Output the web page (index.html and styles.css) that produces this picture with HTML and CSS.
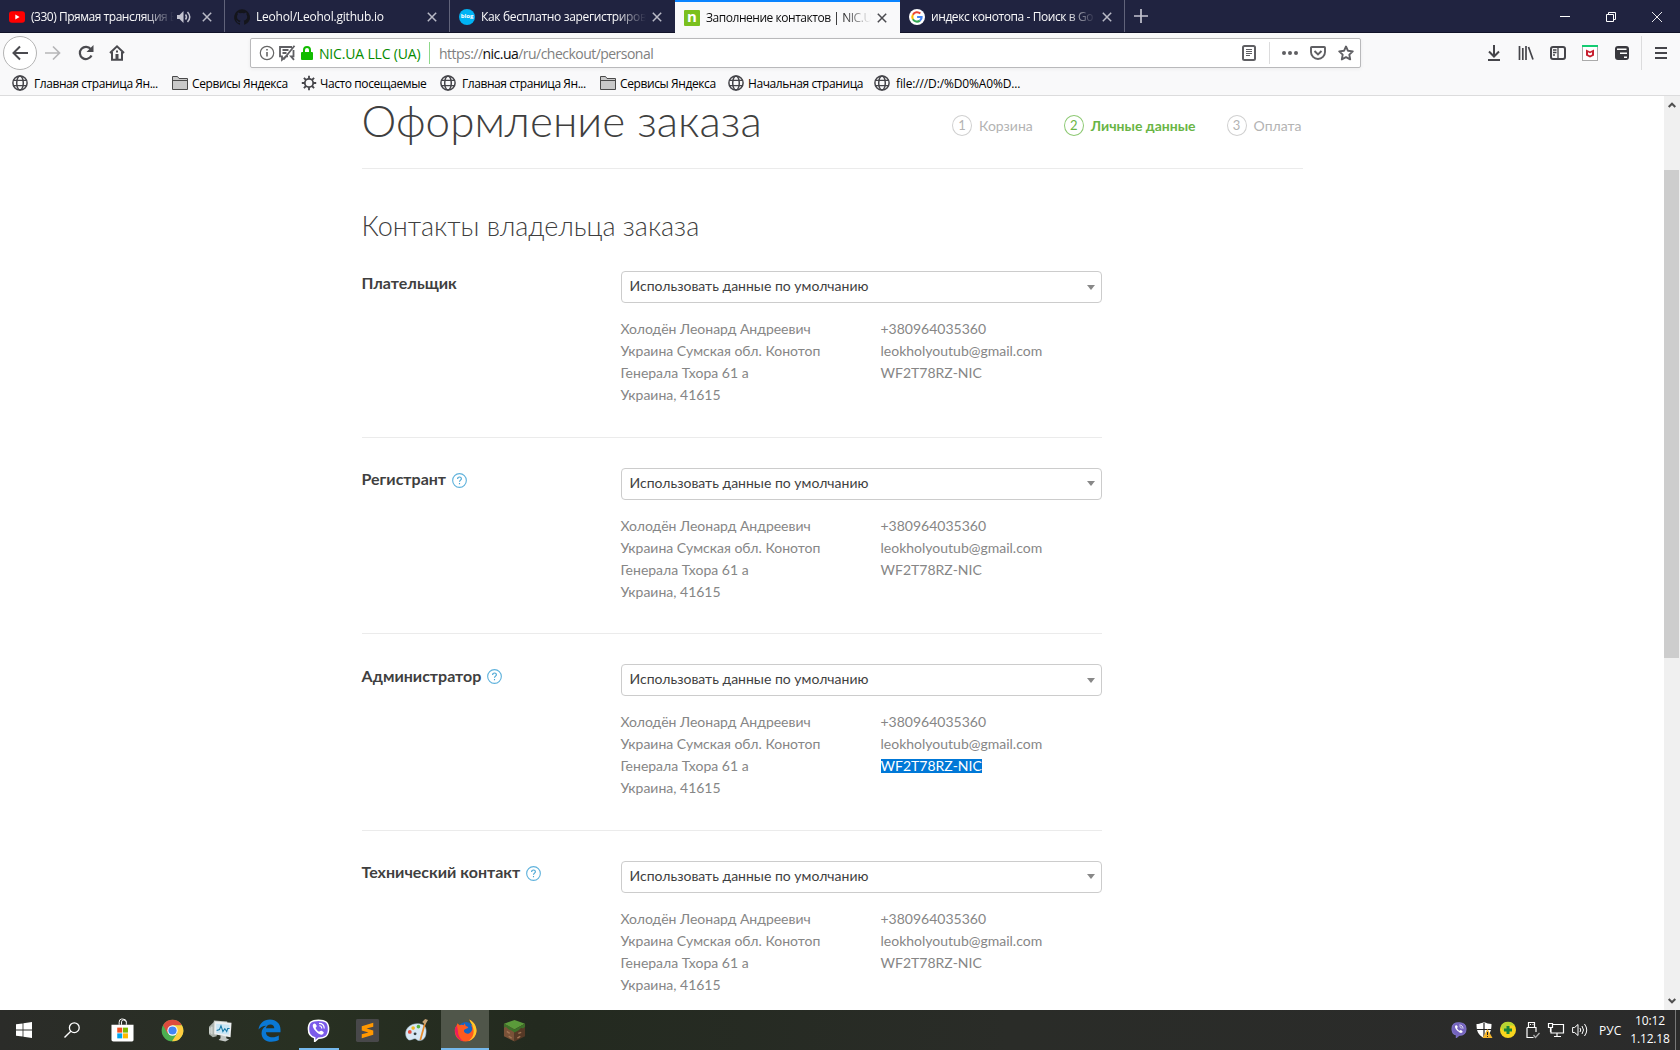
FILE: index.html
```html
<!DOCTYPE html>
<html lang="ru">
<head>
<meta charset="utf-8">
<title>Заполнение контактов | NIC.UA</title>
<link rel="stylesheet" href="styles.css">
</head>
<body>
<svg class="defs" width="0" height="0">
  <defs>
    <symbol id="globe" viewBox="0 0 16 16"><g fill="none" stroke="#45454a" stroke-width="1.5"><circle cx="8" cy="8" r="7.1"/><ellipse cx="8" cy="8" rx="3.3" ry="7"/><path d="M1.5 5.3h13M1.5 10.7h13" stroke-width="1.2"/></g></symbol>
    <symbol id="folder" viewBox="0 0 16 16"><path d="M.5 14.500v-13h5l1.500 2h8.500v11z" fill="#c9c9c9" stroke="#4a4a4a"/><path d="M1 5.500h14" stroke="#4a4a4a"/></symbol>
    <symbol id="close" viewBox="0 0 10 10"><path d="M.8.8l8.400 8.400M9.200.8L.8 9.200" fill="none" stroke="currentColor" stroke-width="1.500"/></symbol>
    <symbol id="phone" viewBox="0 0 24 24"><path d="M12 1.200c7 0 10.500 2 10.500 9.300S19 20 12 20l-4 3.500V19.500C3.500 18.600 1.500 16 1.500 10.500 1.500 3.200 5 1.200 12 1.200z" fill="var(--bubble)" stroke="var(--rim)" stroke-width="1.600"/><path d="M6.500 5.500c1.500-1.500 2.500-.3 3.200.8.800 1.200.4 1.800-.5 2.500-.8.700 2.500 5 3.900 4.200 1-.9 1.500-1.200 2.700-.4 1.500 1 2.500 1.600.9 3.100-1.700 1.600-4 .2-6.200-1.700-2.600-2.300-5.700-6.300-4-8.500z" fill="#fff"/><path d="M12.500 4.500c3.500 0 5.500 2 5.500 5.500M12.800 7c1.600.1 2.600 1.200 2.600 2.800" fill="none" stroke="#fff" stroke-width="1.200"/></symbol>
    <symbol id="question" viewBox="0 0 16 16"><circle cx="8" cy="8" r="7.300" fill="none" stroke="#5fb2dc" stroke-width="1.200"/><path d="M6 6.300c0-2.700 4-2.500 4-.2 0 1.500-2 1.500-2 3.300M8 10.700v1.200" fill="none" stroke="#46a4d3" stroke-width="1.200"/></symbol>
  </defs>
</svg>

<header class="tabs">
  <div class="tab">
    <svg class="fav" viewBox="0 0 16 16"><rect y="2.300" width="16" height="11.400" rx="3" fill="#f00"/><path d="M6.300 5.600v4.800L10.600 8z" fill="#fff"/></svg>
    <span class="tab-title t1">(330) Прямая трансляция В</span>
    <svg class="sound" viewBox="0 0 14 12"><path d="M0 4h2.500L6.500 0v12L2.500 8H0z" fill="#c3c3cf"/><path d="M8.500 3.500q2 2.500 0 5M10.500 1q4.500 5 0 10" fill="none" stroke="#c3c3cf" stroke-width="1.500"/></svg>
    <svg class="x"><use href="#close"/></svg>
  </div>
  <div class="tab">
    <svg class="fav" viewBox="0 0 16 16"><path d="M8 .3A7.900 7.900 0 0 0 5.500 15.700c.4.100.5-.2.500-.4v-1.500c-2.200.5-2.700-.9-2.700-.9-.4-.9-.9-1.200-.9-1.200-.7-.5.100-.5.100-.5.800.1 1.200.8 1.200.8.700 1.300 1.900.9 2.400.7.100-.5.300-.9.500-1.100-1.800-.2-3.600-.9-3.600-4 0-.9.300-1.600.8-2.100-.1-.2-.4-1 .1-2.100 0 0 .7-.2 2.200.8a7.500 7.500 0 0 1 4 0c1.500-1 2.200-.8 2.200-.8.500 1.100.2 1.900.1 2.100.5.600.8 1.300.8 2.100 0 3.100-1.900 3.800-3.600 4 .3.300.5.800.5 1.500v2.200c0 .2.100.5.500.4A7.900 7.900 0 0 0 8 .3z" fill="#14151b"/></svg>
    <span class="tab-title t2">Leohol/Leohol.github.io</span>
    <svg class="x"><use href="#close"/></svg>
  </div>
  <div class="tab no-line">
    <span class="fav blog">blog</span>
    <span class="tab-title t3">Как бесплатно зарегистрирова</span>
    <svg class="x"><use href="#close"/></svg>
  </div>
  <div class="tab active">
    <span class="fav nic">n</span>
    <span class="tab-title t4">Заполнение контактов | NIC.U</span>
    <svg class="x"><use href="#close"/></svg>
  </div>
  <div class="tab">
    <svg class="fav" viewBox="0 0 16 16"><circle cx="8" cy="8" r="8" fill="#fff"/><g fill="none" stroke-width="2.100"><path d="M11.300 4.600A4.700 4.700 0 0 0 3.900 5.700" stroke="#ea4335"/><path d="M3.900 5.700a4.700 4.700 0 0 0 0 4.600" stroke="#fbbc05"/><path d="M3.900 10.300a4.700 4.700 0 0 0 7 1.300" stroke="#34a853"/><path d="M10.900 11.600c1.300-1 1.800-2.200 1.700-3.600H8.100" stroke="#4285f4"/></g></svg>
    <span class="tab-title t5">индекс конотопа - Поиск в Go</span>
    <svg class="x"><use href="#close"/></svg>
  </div>
  <svg class="plus" viewBox="0 0 14 14"><path d="M7 0v14M0 7h14" stroke="#c3c3cf" stroke-width="1.700"/></svg>
  <div class="window-buttons">
    <svg viewBox="0 0 10 10"><path d="M0 4.500h10" stroke="#fff"/></svg>
    <svg viewBox="0 0 10 10"><path d="M.5 2.500h7v7h-7zM2.500 2.500v-2h7v7h-2" fill="none" stroke="#fff"/></svg>
    <svg viewBox="0 0 10 10"><path d="M0 0l10 10M10 0L0 10" stroke="#fff" stroke-width=".9"/></svg>
  </div>
</header>

<nav class="toolbar">
  <div class="history">
    <span class="back"><svg viewBox="0 0 16 16"><path d="M16 8H1.500M8 1.500L1.500 8 8 14.500" fill="none" stroke="#4a4a4f" stroke-width="2"/></svg></span>
    <svg class="forward" viewBox="0 0 16 16"><path d="M0 8h14.500M8 1.500L14.500 8 8 14.500" fill="none" stroke="#b6b6b8" stroke-width="1.700"/></svg>
    <svg class="reload" viewBox="0 0 16 16"><path d="M12.800 4.200A6.100 6.100 0 1 0 13.500 10.500" fill="none" stroke="#4a4a4f" stroke-width="2.200"/><path d="M15.500 0v7h-7z" fill="#4a4a4f"/></svg>
    <svg class="home" viewBox="0 0 16 16"><path d="M1 8l7-6.700L15 8M3 7v7.800h10V7" fill="none" stroke="#4a4a4f" stroke-width="2"/><path d="M6.500 9h3v5h-3zM7 5.500h2v2H7z" fill="#4a4a4f"/></svg>
  </div>
  <div class="address">
    <svg class="info" viewBox="0 0 16 16"><circle cx="8" cy="8" r="6.700" fill="none" stroke="#666" stroke-width="1.200"/><path d="M8 7v4.500M8 4v1.600" stroke="#666" stroke-width="1.600"/></svg>
    <svg class="muted" viewBox="0 0 16 16"><path d="M9 11.300H7l-4 3.500v-3.500H1V2h12M14.500 5v6.300H12l3 3.500" fill="none" stroke="#5f5f63" stroke-width="1.800"/><path d="M3.500 5h6M3.500 8h4M15.500.7L4.500 14.500" stroke="#5f5f63" stroke-width="1.800"/></svg>
    <svg class="lock" viewBox="0 0 12 14"><path d="M3 7V4a3 3 0 0 1 6 0v3" fill="none" stroke="#12bc00" stroke-width="2"/><rect y="6" width="12" height="8" rx="1" fill="#12bc00"/></svg>
    <span class="identity">NIC.UA LLC (UA)</span>
    <span class="url">https://<b>nic.ua</b>/ru/checkout/personal</span>
    <div class="actions">
      <svg viewBox="0 0 16 16"><rect x="2" y="1" width="12" height="14" rx="1.500" fill="none" stroke="#5f5f63" stroke-width="2"/><path d="M5 4.500h6M5 6.500h6M5 8.500h6M5 10.500h4" stroke="#5f5f63"/></svg>
      <svg class="dots" viewBox="0 0 16 16"><g fill="#5f5f63"><circle cx="2" cy="8" r="2"/><circle cx="8" cy="8" r="2"/><circle cx="14" cy="8" r="2"/></g></svg>
      <svg viewBox="0 0 16 16"><path d="M1.800 2h12.400q.8 0 .8.800V7a7 7 0 0 1-14 0V2.800Q1 2 1.800 2z" fill="none" stroke="#5f5f63" stroke-width="1.900"/><path d="M4.500 6L8 9.400 11.500 6" fill="none" stroke="#5f5f63" stroke-width="2"/></svg>
      <svg viewBox="0 0 16 16"><path d="M8 1.500l2 4.300 4.800.6-3.500 3.200.9 4.800L8 12.100l-4.200 2.300.9-4.800L1.200 6.400 6 5.800z" fill="none" stroke="#5f5f63" stroke-width="1.900" stroke-linejoin="round"/></svg>
    </div>
  </div>
  <div class="tools">
    <svg viewBox="0 0 16 16"><path d="M8 0v11M3 6.500l5 5 5-5M2 15h12" fill="none" stroke="#45454a" stroke-width="2"/></svg>
    <svg viewBox="0 0 16 16"><path d="M1.500 1v14M4.800 3v12M8 1v14M10.500 2L15 14.500" fill="none" stroke="#45454a" stroke-width="1.700"/></svg>
    <svg viewBox="0 0 16 16"><rect x="1" y="2" width="14" height="12" rx="2" fill="none" stroke="#45454a" stroke-width="2"/><path d="M8 2v12M3 5h3.500M3 7.500h3.500M3 10h2" stroke="#45454a" stroke-width="1.300"/></svg>
    <svg viewBox="0 0 16 16"><rect x=".5" y=".5" width="15" height="15" fill="#fff" stroke="#aaa"/><path d="M0 0h16v2H0z" fill="#14cc72"/><path d="M4 4.500l4 2 4-2v6L8 12.500 4 10.500z" fill="#c8202f"/><path d="M6 7.300l2 1 2-1v2.200l-2 1-2-1z" fill="#fff"/></svg>
    <svg viewBox="0 0 16 16"><rect x="1" y="1" width="14" height="14" rx="3" fill="#38383d"/><path d="M3 4.300h9.500M6 8.300h7M10 12.300h3" stroke="#fff" stroke-width="1.500"/></svg>
    <svg class="menu" viewBox="0 0 16 16"><path d="M2 3h12M2 8h12M2 13h12" stroke="#45454a" stroke-width="2"/></svg>
  </div>
</nav>

<div class="bookmarks">
  <span class="bm w160"><svg><use href="#globe"/></svg>Главная страница Ян...</span>
  <span class="bm w129 fold"><svg><use href="#folder"/></svg>Сервисы Яндекса</span>
  <span class="bm w139 gear"><svg viewBox="0 0 16 16"><circle cx="8" cy="8" r="4.200" fill="none" stroke="#45454a" stroke-width="1.800"/><path d="M8 .8v3M8 12.200v3M.8 8h3M12.200 8h3M2.900 2.900L5 5M11 11l2.100 2.100M13.100 2.900L11 5M5 11l-2.100 2.100" stroke="#45454a" stroke-width="1.800"/></svg>Часто посещаемые</span>
  <span class="bm w160"><svg><use href="#globe"/></svg>Главная страница Ян...</span>
  <span class="bm w128 fold"><svg><use href="#folder"/></svg>Сервисы Яндекса</span>
  <span class="bm w146 fold"><svg><use href="#globe"/></svg>Начальная страница</span>
  <span class="bm file"><svg><use href="#globe"/></svg>file:///D:/%D0%A0%D...</span>
</div>

<div class="viewport">
  <main class="page">
    <div class="page-head">
      <h1>Оформление заказа</h1>
      <ol class="steps">
        <li><i>1</i>Корзина</li>
        <li class="current"><i>2</i>Личные данные</li>
        <li><i>3</i>Оплата</li>
      </ol>
    </div>
    <h2>Контакты владельца заказа</h2>
    <section class="contact">
      <h3>Плательщик</h3>
      <div class="fields">
        <div class="select">Использовать данные по умолчанию</div>
        <div class="details">
          <p>Холодён Леонард Андреевич<br>Украина Сумская обл. Конотоп<br>Генерала Тхора 61 а<br>Украина, 41615</p>
          <p>+380964035360<br>leokholyoutub@gmail.com<br>WF2T78RZ-NIC</p>
        </div>
      </div>
    </section>
    <section class="contact">
      <h3>Регистрант<svg><use href="#question"/></svg></h3>
      <div class="fields">
        <div class="select">Использовать данные по умолчанию</div>
        <div class="details">
          <p>Холодён Леонард Андреевич<br>Украина Сумская обл. Конотоп<br>Генерала Тхора 61 а<br>Украина, 41615</p>
          <p>+380964035360<br>leokholyoutub@gmail.com<br>WF2T78RZ-NIC</p>
        </div>
      </div>
    </section>
    <section class="contact">
      <h3>Администратор<svg><use href="#question"/></svg></h3>
      <div class="fields">
        <div class="select">Использовать данные по умолчанию</div>
        <div class="details">
          <p>Холодён Леонард Андреевич<br>Украина Сумская обл. Конотоп<br>Генерала Тхора 61 а<br>Украина, 41615</p>
          <p>+380964035360<br>leokholyoutub@gmail.com<br><mark>WF2T78RZ-NIC</mark></p>
        </div>
      </div>
    </section>
    <section class="contact">
      <h3>Технический контакт<svg><use href="#question"/></svg></h3>
      <div class="fields">
        <div class="select">Использовать данные по умолчанию</div>
        <div class="details">
          <p>Холодён Леонард Андреевич<br>Украина Сумская обл. Конотоп<br>Генерала Тхора 61 а<br>Украина, 41615</p>
          <p>+380964035360<br>leokholyoutub@gmail.com<br>WF2T78RZ-NIC</p>
        </div>
      </div>
    </section>
  </main>
  <div class="scrollbar">
    <svg viewBox="0 0 8 6"><path d="M.7 5L4 1.700 7.300 5" fill="none" stroke="#505050" stroke-width="2"/></svg>
    <span class="thumb"></span>
    <svg viewBox="0 0 8 6"><path d="M.7 1L4 4.300 7.300 1" fill="none" stroke="#505050" stroke-width="2"/></svg>
  </div>
</div>

<footer class="taskbar">
  <div class="apps">
    <span class="app start"><svg viewBox="0 0 16 16"><path d="M0 2.300L6.600 1.400v6.200H0zM7.400 1.300L16 0v7.600H7.400zM0 8.400h6.600v6.200L0 13.700zM7.400 8.400H16V16l-8.600-1.300z" fill="#fff"/></svg></span>
    <span class="app search"><svg viewBox="0 0 16 16"><circle cx="10.300" cy="5.700" r="4.900" fill="none" stroke="#fff" stroke-width="1.300"/><path d="M6.800 9.300L.5 15.600" stroke="#fff" stroke-width="1.400"/></svg></span>
    <span class="app wide"><svg viewBox="0 0 24 24"><path d="M8.500 6V3.500Q8.500 0 11 0h1q4 0 4 3v3M11 6V3q0-2 2-2t3 2" fill="none" stroke="#fff"/><path d="M.5 6h23v16q0 1.500-1.500 1.500H2.500Q.5 23.500.5 22z" fill="#fff"/><path d="M6.500 9h5.200v5.200H6.500z" fill="#f25022"/><path d="M12.500 9h5.200v5.200h-5.200z" fill="#7fba00"/><path d="M6.500 15h5.200v5.200H6.500z" fill="#00a4ef"/><path d="M12.500 15h5.200v5.200h-5.200z" fill="#ffb900"/></svg></span>
    <span class="app chrome"><svg viewBox="0 0 24 24"><circle cx="12" cy="12" r="11.300" fill="#4caf50"/><path d="M2.200 6.400A11.300 11.300 0 0 1 21.800 6.400H12L7 15z" fill="#dd4b3e"/><path d="M21.800 6.400A11.300 11.300 0 0 1 11.500 23.300L17 14.500 12 6.400z" fill="#ffcd40"/><circle cx="12" cy="12" r="5.400" fill="#fff"/><circle cx="12" cy="12" r="4.300" fill="#4285f4"/></svg></span>
    <span class="app"><svg viewBox="0 0 24 24"><path d="M0 8l5-5 3 1v14l-4 1-4-3z" fill="#a9b0aa"/><path d="M1 9v6M3 8v8" stroke="#e8ebe8"/><path d="M5 1.500l14 1v13L5 15z" fill="#c3c8c4"/><path d="M12 17h6v3l3 1.500-4 2-7-1.500 2-2z" fill="#c2c7c4"/><path d="M6 2.500L23.500 4 22.500 19 5.500 16z" fill="#eceff0"/><path d="M7.500 5l14 1-.8 10.500L7.500 14.500z" fill="#c9e6f5"/><path d="M8 12l3-1 1.500-4 2 6 2-3 2 3 1-3h2" fill="none" stroke="#1679a8" stroke-width="1.100"/></svg></span>
    <span class="app"><svg viewBox="0 0 24 24"><path d="M.5 11C1.500 4.500 6 .5 12.500.5 19 .5 23.500 5 23.500 11v2.800H8.300c.2 3.800 3 5.200 6.700 5.200 2.600 0 4.800-.7 6.700-1.900v4.900c-2.300 1.200-4.800 1.800-7.700 1.800-6.200 0-10.300-3.600-10.300-9 0-3.500 1.900-6.200 5-7.700C5.500 7 2.700 8.500.5 11zM8.300 9.700h8.700c0-2.600-1.600-4-4-4-2.500 0-4.300 1.600-4.700 4z" fill="#0a78d4"/></svg></span>
    <span class="app running"><svg><use href="#phone"/></svg></span>
    <span class="app"><svg viewBox="0 0 24 24"><rect width="24" height="24" rx="1.500" fill="#48484a"/><path d="M6 7.500L18 4v4l-7 2 7 2v4.500L6 20v-4l7-2-7-2z" fill="#ff9800"/></svg></span>
    <span class="app"><svg viewBox="0 0 24 24"><path d="M.7 15C.7 9.500 6 5 12.500 5S22 7.500 22 12.500s-1.500 10-7 10c-3 0-2.500-2-5-2-2 0-3 1.500-5 1.500S.7 19 .7 15z" fill="#d7e9f6" stroke="#a8bfce" stroke-width=".6"/><circle cx="5" cy="13.500" r="2" fill="#e34c3c"/><circle cx="8.500" cy="9.500" r="1.900" fill="#f2b824"/><circle cx="14" cy="8" r="1.900" fill="#57b33e"/><circle cx="10.500" cy="15.500" r="1.500" fill="#334044"/><path d="M21 4l-5 18" stroke="#e88a2b" stroke-width="1.800"/><path d="M18 3l3-3 3 1-3 5z" fill="#c8a477"/></svg></span>
    <span class="app focused"><svg viewBox="0 0 24 24"><circle cx="12.500" cy="12" r="9" fill="#1665c1"/><path d="M3.500 4.500L6 6.500c1.500-.7 3-.7 4 0l1.500-2c0 3 1.500 3.300 3.500 4-1 2-3.500 1.500-4.500 3-.7 2.500 2.300 4.500 5 3.500 4-1.500 4.500-6 2-8.500 2 .3 3 1.500 3.500 2.500C20.500 5 17 3.500 16 .5c5 2.500 7.500 7 7.500 12A11.300 11.300 0 0 1 12 23.500C5.500 23.500.8 19 .8 12.500c0-3 1-5 2.200-6z" fill="#ff5a1f"/><path d="M16 .5c5 2.500 7.500 7 7.500 12A11.300 11.300 0 0 1 15 23c4-3 5.500-6 5.500-10C20.500 7 17 4 16 .5z" fill="#ffc928"/><path d="M1 10c-.7 6 3 12 9 13.400C6 20.500 4 17 4 12L3 6.500z" fill="#ee1d5c"/></svg></span>
    <span class="app"><svg viewBox="0 0 24 24"><path d="M12 1l11 4-11 6L1 5z" fill="#5a9a3a"/><path d="M1 5l11 6v12.500L1 18z" fill="#7a5238"/><path d="M23 5l-11 6v12.500L23 18z" fill="#563926"/><path d="M1 5l11 6 11-6v3l-2 2-2-1-3 3-4 2-3-2-3-1-3-3-2 1z" fill="#3d7129"/><path d="M4 13l3 2M6 18l3 2M16 15l3-1M15 20l3-2" stroke="#a17554" stroke-width="1.500"/></svg></span>
  </div>
  <div class="tray">
    <svg class="tray-viber"><use href="#phone"/></svg>
    <svg viewBox="0 0 16 16"><path d="M8 0q3.500 2 7.500 2c0 7-1.500 11-7.500 14C2 13 .5 9 .5 2 4.500 2 8 0 8 0z" fill="#fff"/><path d="M8 .5v15M1 7.500h14" stroke="#222" stroke-width="1.200"/><path d="M11.500 7l5 9h-10z" fill="#f5b52c"/><path d="M11.500 10v3M11.500 14v1" stroke="#222"/></svg>
    <svg viewBox="0 0 16 16"><circle cx="8" cy="8" r="8" fill="#f7d51e"/><path d="M1 4a8 8 0 0 1 14 0c-5-2-9 0-10 5-2 0-4-2-4-5z" fill="#b6d432"/><path d="M8 4v8M4 8h8" stroke="#16843b" stroke-width="3"/></svg>
    <svg viewBox="0 0 16 16"><path d="M4.500 5V.5h6V5M3 5.500h9V10M3 5.500v10h6.500" fill="none" stroke="#fff" stroke-width="1.200"/><path d="M6 2.500h1M8.500 2.500h1" stroke="#fff"/><path d="M9.500 13l2 2.500 4-4.500" fill="none" stroke="#aaa" stroke-width="1.300"/></svg>
    <svg viewBox="0 0 16 16"><path d="M5 2.500h10.500v8.500H3V6M9 11v3M6 14.500h7M.5 1.500h4v4h-4zM2.500 6v4" fill="none" stroke="#fff" stroke-width="1.200"/></svg>
    <svg viewBox="0 0 16 16"><path d="M.6 5.500h2L6 2.500v11l-3.400-3h-2z" fill="none" stroke="#fff"/><path d="M8 6q1.500 2 0 4M10 4q3 4 0 8M12.500 2q4.500 6 0 12" fill="none" stroke="#fff"/></svg>
    <span class="lang">РУС</span>
    <div class="clock"><span>10:12</span><span>1.12.18</span></div>
  </div>
</footer>
</body>
</html>
```
FILE: styles.css
```css
* { box-sizing: border-box; }
body {
  margin: 0;
  width: 1680px;
  height: 1050px;
  overflow: hidden;
  display: flex;
  flex-direction: column;
  background: #fff;
  font-family: "Open Sans", "Noto Sans", sans-serif;
  font-size: 12px;
  color: #0c0c0d;
}
.defs { position: absolute; }
svg { display: block; flex: none; overflow: visible; }

/* tab strip */
.tabs {
  flex: none;
  display: flex;
  height: 33px;
  background: #202340;
  border-bottom: 1px solid #111329;
}
.tab {
  width: 225px;
  height: 32px;
  padding: 1px 12px 0 9px;
  display: flex;
  align-items: center;
  color: #f9f9fa;
  border-right: 1px solid #61637a;
}
.no-line { border-right: 0; padding-right: 13px; }
.tab.active {
  height: 33px;
  background: #f9f9fa;
  color: #0c0c0d;
  border-right: 0;
  border-top: 2px solid #0a84ff;
  padding-top: 0;
  padding-right: 13px;
}
.fav { width: 16px; height: 16px; margin-right: 6px; flex: none; }
.blog {
  border-radius: 50%;
  background: #00b3f4;
  color: #fff;
  font: bold 6px/15px "Open Sans", sans-serif;
  text-align: center;
}
.nic {
  background: #7ac01e;
  color: #fff;
  border-radius: 1px;
  font: bold 15px/13px "Open Sans", sans-serif;
  text-align: center;
}
.tab-title {
  flex: 1;
  min-width: 0;
  white-space: nowrap;
  -webkit-mask-image: linear-gradient(90deg, #000 calc(100% - 30px), transparent);
  mask-image: linear-gradient(90deg, #000 calc(100% - 30px), transparent);
}
.t1 { letter-spacing: -.47px; }
.t2 { letter-spacing: -.2px; }
.t3 { letter-spacing: -.34px; }
.t4 { letter-spacing: -.46px; }
.t5 { letter-spacing: -.42px; }
.sound { width: 14px; height: 12px; margin: 0 5px 0 3px; }
.x { width: 10px; height: 10px; margin-left: 6px; color: #b9bac6; }
.active .x { color: #4a4a4f; }
.plus { width: 14px; height: 14px; margin: 9px 0 0 9px; }
.window-buttons { margin: 12px 18px 0 auto; display: flex; gap: 36px; }
.window-buttons svg { width: 10px; height: 10px; }

/* navigation toolbar */
.toolbar {
  flex: none;
  height: 40px;
  display: flex;
  background: #f9f9fa;
}
.history { width: 250px; height: 40px; display: flex; align-items: center; padding-left: 3px; }
.back {
  width: 34px;
  height: 34px;
  border: 1px solid #b4b4b4;
  border-radius: 50%;
  background: #fff;
  display: grid;
  place-items: center;
}
.history svg { width: 16px; height: 16px; }
.history .forward { margin-left: 8px; }
.history .reload { margin-left: 17px; }
.history .home { margin-left: 15px; }
.address {
  width: 1111px;
  height: 30px;
  margin-top: 5px;
  border: 1px solid #b9b9bb;
  border-radius: 2px;
  background: #fff;
  box-shadow: 0 1px 4px rgba(0, 0, 0, .06);
  display: flex;
  align-items: center;
  font-size: 14px;
  padding-left: 8px;
}
.info { width: 16px; height: 16px; margin-right: 4px; }
.muted { width: 16px; height: 16px; margin-right: 6px; }
.lock { width: 12px; height: 14px; margin-right: 6px; }
.identity {
  width: 111px;
  height: 22px;
  line-height: 23px;
  letter-spacing: -.18px;
  color: #058b00;
  border-right: 1px solid #8ed98a;
  white-space: nowrap;
}
.url { margin-left: 9px; padding-top: 1px; color: #7f7f80; white-space: nowrap; letter-spacing: -.53px; }
.url b { font-weight: normal; color: #0c0c0d; }
.actions { margin-left: auto; margin-right: 6px; display: flex; gap: 12px; align-items: center; }
.actions svg { width: 16px; height: 16px; }
.actions .dots { box-sizing: content-box; border-left: 1px solid #dcdcdd; padding: 3px 0 3px 12px; }
.tools { margin-left: auto; display: flex; gap: 16px; align-items: center; padding-right: 11px; height: 40px; }
.tools svg { width: 16px; height: 16px; }
.tools .menu { box-sizing: content-box; border-left: 1px solid #dcdcdd; padding: 9px 0 9px 11px; margin-left: -5px; }

/* bookmarks toolbar */
.bookmarks {
  flex: none;
  height: 23px;
  display: flex;
  background: #f9f9fa;
  border-bottom: 1px solid #dcdcdd;
  padding-left: 12px;
  padding-bottom: 2px;
  color: #000;
  letter-spacing: -.43px;
}
.bm { display: flex; align-items: center; gap: 6px; white-space: nowrap; }
.bm svg { width: 16px; height: 16px; margin-top: -1px; }
.fold { gap: 4px; }
.fold, .gear { letter-spacing: -.4px; }
.gear { gap: 3px; }
.file { letter-spacing: -.14px; }
.w160 { width: 160px; }
.w129 { width: 129px; }
.w139 { width: 139px; }
.w128 { width: 128px; }
.w146 { width: 146px; }

/* web page */
.viewport { height: 914px; flex: none; display: flex; overflow: hidden; }
.page {
  width: 941px;
  margin-left: 361.500px;
  font-family: Lato, sans-serif;
  color: #3f3f3f;
}
.page-head {
  height: 73px;
  border-bottom: 1px solid #ebebeb;
  display: flex;
  justify-content: space-between;
}
h1 { margin: -2px 0 0; font-size: 44px; line-height: 53px; font-weight: 300; white-space: nowrap; }
.steps {
  margin: 0;
  padding: 19px 1px 0 0;
  list-style: none;
  display: flex;
  gap: 31px;
  font-size: 14px;
  color: #b3b3b3;
}
.steps li { display: flex; height: 21px; align-items: center; white-space: nowrap; }
.steps i {
  width: 20px;
  height: 21px;
  margin-right: 7px;
  border: 1px solid #d0d0d0;
  border-radius: 50%;
  font-style: normal;
  font-size: 13px;
  line-height: 19px;
  text-align: center;
}
.steps .current { color: #69b545; font-weight: bold; }
.steps .current i { border-color: #8dc973; font-weight: normal; }
h2 { margin: 40px 0 0; height: 62px; font-size: 27px; line-height: 34px; font-weight: 300; white-space: nowrap; }
.contact {
  width: 740px;
  height: 196.600px;
  display: flex;
}
.contact:not(:last-child)::after {
  content: "";
  align-self: flex-start;
  flex: none;
  width: 740px;
  height: 1px;
  margin: 165.800px 0 0 -740px;
  background: #ebebeb;
}
h3 {
  width: 259px;
  flex: none;
  margin: 1px 0 0;
  height: 21px;
  display: flex;
  align-items: center;
  gap: 6px;
  font-size: 16px;
  line-height: 20px;
  font-weight: bold;
  white-space: nowrap;
}
h3 svg { width: 15px; height: 15px; margin-top: 2px; }
.fields { width: 481px; flex: none; }
.select {
  height: 32px;
  border: 1px solid #ccc;
  border-radius: 4px;
  display: flex;
  justify-content: space-between;
  align-items: center;
  padding: 0 6px 3px 8px;
  font-size: 14px;
}
.select::after { content: ""; border: 4px solid transparent; border-top: 5px solid #888; border-bottom: 0; margin-top: 3px; }
.details { display: grid; grid-template-columns: 260px 1fr; padding-top: 15px; font-size: 14px; line-height: 22px; color: #868686; }
.details p { margin: 0; white-space: nowrap; }
mark { background: #0078d7; color: #fff; line-height: 14px; display: inline-block; }
.scrollbar {
  width: 16px;
  margin-left: auto;
  background: #f0f0f0;
  display: flex;
  flex-direction: column;
  align-items: center;
  justify-content: space-between;
  padding: 6px 0;
}
.scrollbar svg { width: 8px; height: 6px; margin-right: 1px; }
.thumb { width: 15px; height: 488px; background: #cdcdcd; margin: 62px 1px auto 0; }

/* desktop taskbar */
.taskbar {
  flex: none;
  height: 40px;
  display: flex;
  justify-content: space-between;
  background: linear-gradient(90deg, #2b2c29, #283022 18%, #232a1f 32%, #2a2c28 60%, #2b2b2b);
  color: #fff;
}
.apps { display: flex; }
.app { width: 49px; height: 40px; display: grid; place-items: center; }
.app svg { width: 23px; height: 23px; }
.start { width: 48px; }
.start svg, .search svg { width: 16px; height: 16px; }
.search { width: 48px; }
.wide { width: 52px; }
.chrome { width: 48px; }
.running { background: linear-gradient(#76b9ed, #76b9ed) 5px 38px / 40px 2px no-repeat; --rim: #fff; --bubble: #7b5bea; }
.focused { width: 48px; background: linear-gradient(#76b9ed, #76b9ed) 0 38px / 48px 2px no-repeat, #50564a; }
.app:last-child { padding-left: 2px; }
.tray { display: flex; align-items: center; gap: 8px; padding-right: 4px; }
.tray svg { width: 16px; height: 16px; }
.tray .tray-viber { margin-right: 1px; --rim: #7d70c4; --bubble: #7463bd; }
.lang { margin-left: 3px; width: 23px; }
.clock {
  width: 46px;
  height: 40px;
  border-right: 1px solid #777;
  padding: 2px 5px 0 0;
  display: flex;
  flex-direction: column;
  align-items: center;
  line-height: 18px;
  letter-spacing: -.15px;
  white-space: nowrap;
}
```
